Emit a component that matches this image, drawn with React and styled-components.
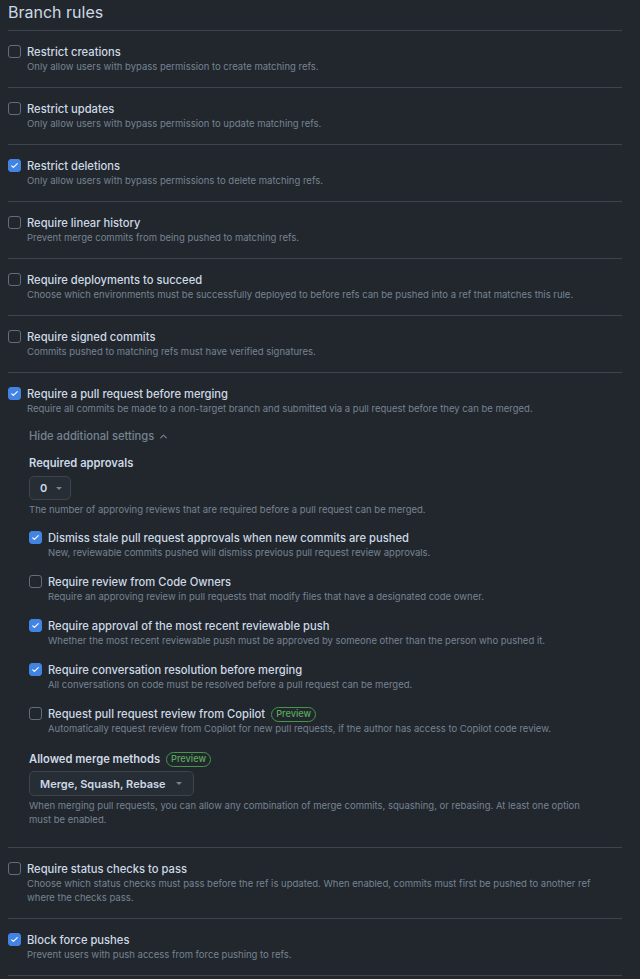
import React from 'react'
import styled, { createGlobalStyle } from 'styled-components'

const GlobalStyle = createGlobalStyle`
  html, body {
    margin: 0;
    padding: 0;
    background: #22272e;
  }
  body {
    font-family: Inter, "Liberation Sans", sans-serif;
    color: #adbac7;
    -webkit-font-smoothing: antialiased;
  }
`

const Page = styled.div`
  width: 614px;
  padding: 0 8px;
`

const Heading = styled.h2`
  margin: 0;
  height: 30px;
  font-size: 16px;
  font-weight: 400;
  line-height: 24px;
  color: #cdd9e5;
  border-bottom: 1px solid #3d444d;
`

const Section = styled.div`
  display: flex;
  gap: 6px;
  padding: 13px 0 ${props => props.pb || 13}px;
  border-bottom: 1px solid #3d444d;
`

const Row = styled.div`
  display: flex;
  gap: 6px;
`

const Box = styled.span`
  flex: none;
  width: 13px;
  height: 13px;
  margin-top: 1px;
  box-sizing: border-box;
  border-radius: 3px;
  border: 1px solid ${props => props.checked ? '#4184e4' : '#636e7b'};
  background: ${props => props.checked ? '#4184e4' : 'transparent'};
  display: flex;
  align-items: center;
  justify-content: center;
`

const Body = styled.div`
  flex: 1;
  min-width: 0;
  padding-right: ${props => props.pr || 0}px;
`

const Title = styled.div`
  display: flex;
  align-items: center;
  gap: 6px;
  font-size: 11.2px;
  font-weight: 500;
  line-height: 16px;
  color: #cdd9e5;
`

const Desc = styled.div`
  font-size: 9.5px;
  line-height: 14px;
  color: #768390;
`

const Nested = styled.div`
  margin-left: 2px;
  padding: 11px 6px 0 0;
`

const Toggle = styled.div`
  display: flex;
  align-items: center;
  gap: 5px;
  font-size: 11.2px;
  font-weight: 500;
  line-height: 18px;
  color: #768390;
`

const Label = styled.div`
  display: flex;
  align-items: center;
  gap: 6px;
  margin-top: ${props => props.mt || 0}px;
  font-size: 11.2px;
  font-weight: 600;
  line-height: 16px;
  color: #cdd9e5;
`

const Select = styled.div`
  display: inline-flex;
  align-items: center;
  gap: ${props => props.gap || 9}px;
  height: ${props => props.h || 24}px;
  margin-top: ${props => props.mt || 5}px;
  padding: 0 ${props => props.pr || 8}px 0 10px;
  box-sizing: border-box;
  border: 1px solid #3d444d;
  border-radius: 5px;
  background: #272d35;
  font-size: 11px;
  font-weight: 600;
  color: #cdd9e5;
`

const Caret = styled.span`
  width: 0;
  height: 0;
  border-left: 3px solid transparent;
  border-right: 3px solid transparent;
  border-top: 3px solid #768390;
`

const Help = styled(Desc)`
  margin-top: 3px;
`

const Options = styled.div`
  display: flex;
  flex-direction: column;
  gap: 14px;
  margin-top: 13px;
`

const Badge = styled.span`
  display: inline-flex;
  align-items: center;
  height: 15px;
  padding: 0 4px;
  box-sizing: border-box;
  border: 1px solid #46954a;
  border-radius: 8px;
  font-size: 9.2px;
  font-weight: 500;
  color: #57ab5a;
`

const Check = ({ checked }) => (
  <Box checked={checked}>
    {checked && (
      <svg width="9" height="9" viewBox="0 0 16 16" fill="none">
        <path d="M3 8.5l3 3 7-7" stroke="#fff" strokeWidth="2" strokeLinecap="round" strokeLinejoin="round" />
      </svg>
    )}
  </Box>
)

const Rule = ({ checked, title, desc, children, pb }) => (
  <Section pb={pb}>
    <Check checked={checked} />
    <Body pr={16}>
      <Title>{title}</Title>
      <Desc>{desc}</Desc>
      {children}
    </Body>
  </Section>
)

const Option = ({ checked, title, desc, badge }) => (
  <Row>
    <Check checked={checked} />
    <Body>
      <Title>{title}{badge && <Badge>Preview</Badge>}</Title>
      <Desc>{desc}</Desc>
    </Body>
  </Row>
)

const options = [
  { checked: true, title: 'Dismiss stale pull request approvals when new commits are pushed', desc: 'New, reviewable commits pushed will dismiss previous pull request review approvals.' },
  { checked: false, title: 'Require review from Code Owners', desc: 'Require an approving review in pull requests that modify files that have a designated code owner.' },
  { checked: true, title: 'Require approval of the most recent reviewable push', desc: 'Whether the most recent reviewable push must be approved by someone other than the person who pushed it.' },
  { checked: true, title: 'Require conversation resolution before merging', desc: 'All conversations on code must be resolved before a pull request can be merged.' },
  { checked: false, title: 'Request pull request review from Copilot', badge: true, desc: 'Automatically request review from Copilot for new pull requests, if the author has access to Copilot code review.' },
]

export default function App() {
  return (
    <Page>
      <GlobalStyle />
      <Heading>Branch rules</Heading>
      <Rule title="Restrict creations" desc="Only allow users with bypass permission to create matching refs." />
      <Rule title="Restrict updates" desc="Only allow users with bypass permission to update matching refs." />
      <Rule checked title="Restrict deletions" desc="Only allow users with bypass permissions to delete matching refs." />
      <Rule title="Require linear history" desc="Prevent merge commits from being pushed to matching refs." />
      <Rule title="Require deployments to succeed" desc="Choose which environments must be successfully deployed to before refs can be pushed into a ref that matches this rule." />
      <Rule title="Require signed commits" desc="Commits pushed to matching refs must have verified signatures." />
      <Rule
        checked
        pb={20}
        title="Require a pull request before merging"
        desc="Require all commits be made to a non-target branch and submitted via a pull request before they can be merged."
      >
        <Nested>
          <Toggle>
            Hide additional settings
            <svg width="9" height="9" viewBox="0 0 16 16" fill="none">
              <path d="M3 10.5l5-5 5 5" stroke="#768390" strokeWidth="2" strokeLinecap="round" strokeLinejoin="round" />
            </svg>
          </Toggle>
          <Label mt={10}>Required approvals</Label>
          <Select>0<Caret /></Select>
          <Help>The number of approving reviews that are required before a pull request can be merged.</Help>
          <Options>
            {options.map(o => <Option key={o.title} {...o} />)}
          </Options>
          <Label mt={15}>Allowed merge methods<Badge>Preview</Badge></Label>
          <Select mt={4} h={25} gap={10} pr={11}>Merge, Squash, Rebase<Caret /></Select>
          <Help>When merging pull requests, you can allow any combination of merge commits, squashing, or rebasing. At least one option must be enabled.</Help>
        </Nested>
      </Rule>
      <Rule title="Require status checks to pass" desc="Choose which status checks must pass before the ref is updated. When enabled, commits must first be pushed to another ref where the checks pass." />
      <Rule checked title="Block force pushes" desc="Prevent users with push access from force pushing to refs." />
    </Page>
  )
}
